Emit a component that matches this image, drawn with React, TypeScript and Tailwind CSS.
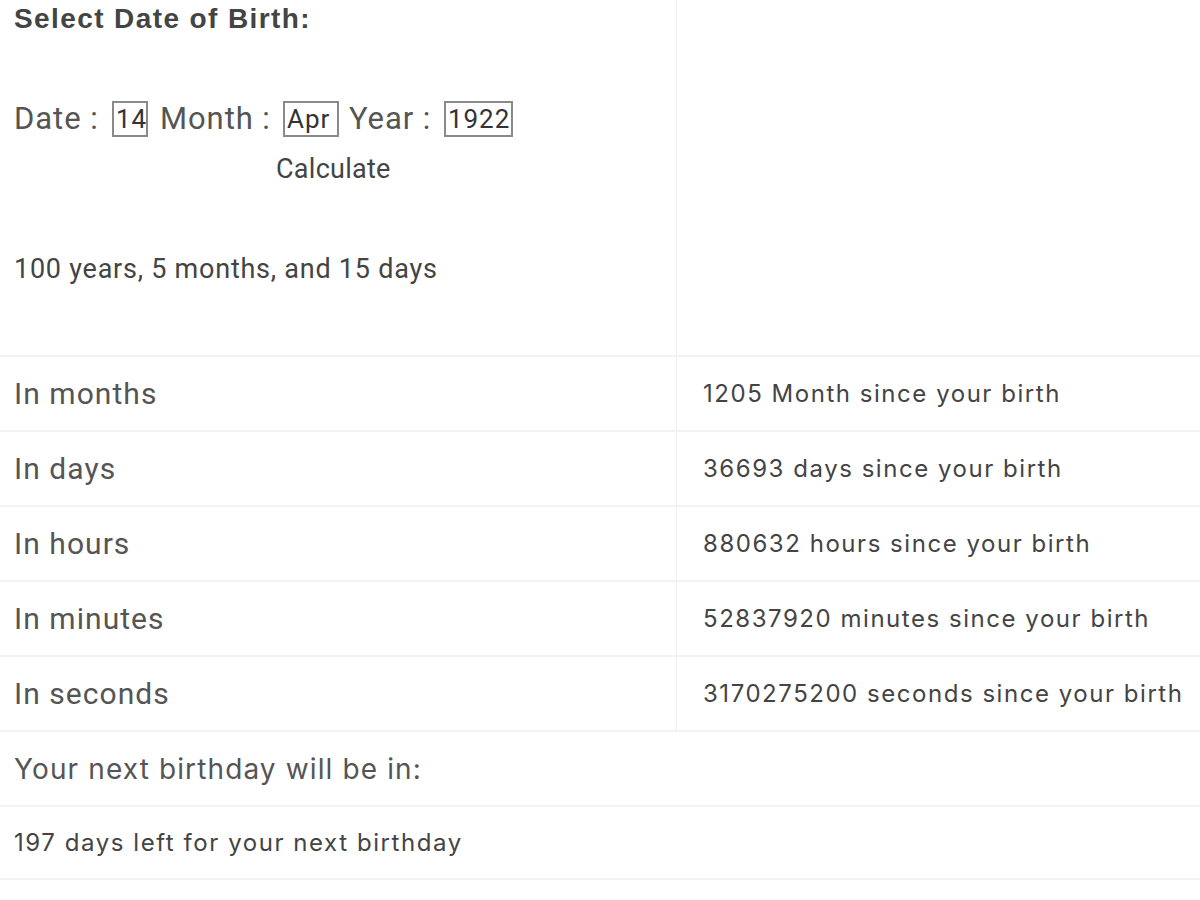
const rows = [
  { label: "In months", value: "1205 Month since your birth" },
  { label: "In days", value: "36693 days since your birth" },
  { label: "In hours", value: "880632 hours since your birth" },
  { label: "In minutes", value: "52837920 minutes since your birth" },
  { label: "In seconds", value: "3170275200 seconds since your birth" },
];

function Box({ children, w }: { children: string; w: string }) {
  return (
    <span
      className={`inline-flex h-[36px] shrink-0 items-center border-2 border-[#8a8a8a] px-[2px] text-[26px] leading-none text-[#333] ${w}`}
    >
      {children}
    </span>
  );
}

export default function App() {
  return (
    <div className="min-h-[900px] w-[1200px] bg-white font-['Roboto',sans-serif] text-[#555]">
      <div className="grid grid-cols-[677px_1fr]">
        <div className="h-[355px] border-r border-[#efefef] px-[14px]">
          <h2 className="pt-[3px] font-['Liberation_Sans',Arial,sans-serif] text-[28px] font-bold leading-[32px] tracking-[0.05em] text-[#444]">
            Select Date of Birth:
          </h2>
          <div className="mt-[61px] flex items-center text-[31px] tracking-[0.03em]">
            <span className="w-[98px]">Date :</span>
            <Box w="w-[36px]">14</Box>
            <span className="ml-[12px] w-[123px]">Month :</span>
            <Box w="w-[56px]">Apr</Box>
            <span className="ml-[10px] w-[95px]">Year :</span>
            <Box w="w-[69px]">1922</Box>
          </div>
          <div className="mt-[11px] pl-[262px] text-[27px] leading-[30px] tracking-[0.01em] text-[#444]">
            Calculate
          </div>
          <p className="mt-[70px] text-[27px] leading-[30px] tracking-[0.028em] text-[#444]">
            100 years, 5 months, and 15 days
          </p>
        </div>
        <div />
      </div>

      {rows.map((row) => (
        <div
          key={row.label}
          className="grid h-[75px] grid-cols-[677px_1fr] border-t-2 border-[#f2f2f2]"
        >
          <div className="flex items-center border-r border-[#efefef] px-[14px] text-[30px] tracking-[0.035em]">
            {row.label}
          </div>
          <div className="flex items-center whitespace-nowrap pl-[26px] font-['Inter',sans-serif] text-[24px] tracking-[0.064em] text-[#444]">
            {row.value}
          </div>
        </div>
      ))}

      <div className="flex h-[75px] items-center border-t-2 border-[#f2f2f2] px-[14px] font-['Inter',sans-serif] text-[28px] tracking-[0.04em] text-[#555]">
        Your next birthday will be in:
      </div>
      <div className="flex h-[75px] items-center border-y-2 border-[#f2f2f2] px-[14px] font-['Inter',sans-serif] text-[24px] tracking-[0.065em] text-[#444]">
        197 days left for your next birthday
      </div>
    </div>
  );
}
